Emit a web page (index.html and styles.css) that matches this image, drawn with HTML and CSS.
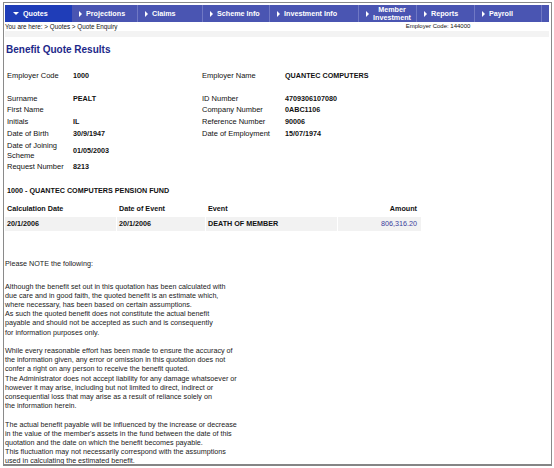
FILE: index.html
```html
<!DOCTYPE html>
<html>
<head>
<meta charset="utf-8">
<title>Benefit Quote Results</title>
<link rel="stylesheet" href="styles.css">
</head>
<body>
<div class="frame">
  <nav class="nav">
    <a class="tab tab-sel w-quotes"><span class="arr-down"></span>Quotes</a>
    <a class="tab w-proj"><span class="arr"></span>Projections</a>
    <a class="tab w-claims"><span class="arr"></span>Claims</a>
    <a class="tab w-scheme"><span class="arr"></span>Scheme Info</a>
    <a class="tab w-invest"><span class="arr"></span>Investment Info</a>
    <a class="tab w-member"><span class="arr"></span><span class="two">Member<br>Investment</span></a>
    <a class="tab w-reports"><span class="arr"></span>Reports</a>
    <a class="tab w-payroll"><span class="arr"></span>Payroll</a>
    <span class="tab-fill"></span>
  </nav>
  <div class="crumbs">
    <span class="crumb-path">You are here: &gt; Quotes &gt; Quote Enquiry</span>
    <span class="crumb-emp">Employer Code: 144000</span>
  </div>
  <div class="band"></div>

  <h1 class="title">Benefit Quote Results</h1>

  <div class="details">
    <div class="lbl">Employer Code</div><div class="val">1000</div><div class="lbl">Employer Name</div><div class="val">QUANTEC COMPUTERS</div>
    <div class="spacer"></div>
    <div class="lbl">Surname</div><div class="val">PEALT</div><div class="lbl">ID Number</div><div class="val">4709306107080</div>
    <div class="lbl">First Name</div><div class="val"></div><div class="lbl">Company Number</div><div class="val">0ABC1106</div>
    <div class="lbl">Initials</div><div class="val">IL</div><div class="lbl">Reference Number</div><div class="val">90006</div>
    <div class="lbl">Date of Birth</div><div class="val">30/9/1947</div><div class="lbl">Date of Employment</div><div class="val">15/07/1974</div>
    <div class="lbl">Date of Joining Scheme</div><div class="val">01/05/2003</div><div class="lbl"></div><div class="val"></div>
    <div class="lbl">Request Number</div><div class="val">8213</div><div class="lbl"></div><div class="val"></div>
  </div>

  <h2 class="fund">1000 - QUANTEC COMPUTERS PENSION FUND</h2>

  <table class="calc">
    <thead>
      <tr>
        <th class="c1">Calculation Date</th>
        <th class="c2">Date of Event</th>
        <th class="c3">Event</th>
        <th class="c4">Amount</th>
      </tr>
    </thead>
    <tbody>
      <tr>
        <td class="c1">20/1/2006</td>
        <td class="c2">20/1/2006</td>
        <td class="c3">DEATH OF MEMBER</td>
        <td class="c4 amount">806,316.20</td>
      </tr>
    </tbody>
  </table>

  <div class="notes">
    <p class="lead">Please NOTE the following:</p>
    <p>Although the benefit set out in this quotation has been calculated with<br>due care and in good faith, the quoted benefit is an estimate which,<br>where necessary, has been based on certain assumptions.<br>As such the quoted benefit does not constitute the actual benefit<br>payable and should not be accepted as such and is consequently<br>for information purposes only.</p>
    <p>While every reasonable effort has been made to ensure the accuracy of<br>the information given, any error or omission in this quotation does not<br>confer a right on any person to receive the benefit quoted.<br>The Administrator does not accept liability for any damage whatsoever or<br>however it may arise, including but not limited to direct, indirect or<br>consequential loss that may arise as a result of reliance solely on<br>the information herein.</p>
    <p>The actual benefit payable will be influenced by the increase or decrease<br>in the value of the member's assets in the fund between the date of this<br>quotation and the date on which the benefit becomes payable.<br>This fluctuation may not necessarily correspond with the assumptions<br>used in calculating the estimated benefit.</p>
  </div>
</div>
</body>
</html>
```
FILE: styles.css
```css
html, body {
  margin: 0;
  padding: 0;
  background: #ffffff;
}
body {
  font-family: "Liberation Sans", Arial, sans-serif;
  color: #111111;
}
.frame {
  box-sizing: border-box;
  margin: 2px 2px 0 3px;
  width: 549px;
  height: 464px;
  border: 1px solid #8a8a8a;
  border-bottom: 2px solid #858585;
  overflow: hidden;
  background: #ffffff;
}

/* navigation */
.nav {
  display: flex;
  height: 17px;
  margin: 2px 2px 0 1px;
  background: #4a55b2;
}
.tab {
  box-sizing: border-box;
  display: flex;
  align-items: center;
  height: 17px;
  padding-left: 7px;
  border-right: 1px solid #7078c4;
  color: #ffffff;
  font-weight: bold;
  font-size: 7.2px;
  white-space: nowrap;
  text-decoration: none;
}
.tab-sel {
  background: #1f3db8;
  padding-left: 8px;
  border-right-color: #1f3db8;
}
.w-quotes { width: 67px; }
.w-proj { width: 66px; }
.w-claims { width: 65px; }
.w-scheme { width: 67px; }
.w-invest { width: 89px; }
.w-member { width: 58px; }
.w-reports { width: 58px; }
.w-payroll { width: 67px; }
.tab-fill { flex: 1; }
.arr {
  width: 0;
  height: 0;
  border-left: 3px solid #ffffff;
  border-top: 3px solid transparent;
  border-bottom: 3px solid transparent;
  margin-right: 4px;
  flex: none;
}
.arr-down {
  width: 0;
  height: 0;
  border-top: 3px solid #ffffff;
  border-left: 3px solid transparent;
  border-right: 3px solid transparent;
  margin-right: 4px;
  flex: none;
}
.two {
  display: block;
  text-align: center;
  line-height: 8px;
}

/* breadcrumb */
.crumbs {
  display: flex;
  height: 9px;
  line-height: 9px;
  font-size: 6.3px;
  margin-left: 1px;
}
.crumb-path { width: 383px; }
.crumb-emp { width: 100px; text-align: center; font-size: 6px; }
.band {
  height: 6px;
  background: #f3f3f3;
  margin: 0 2px 0 1px;
}

.title {
  margin: 7px 0 0 2px;
  font-size: 10px;
  line-height: 12px;
  color: #1d2889;
  font-weight: bold;
}

/* details */
.details {
  display: grid;
  grid-template-columns: 66px 129px 83px 1fr;
  margin: 14px 0 0 3px;
  font-size: 7.5px;
  line-height: 9.8px;
  align-items: center;
}
.details > div { padding: 1px 0; }
.details .val {
  font-weight: bold;
  font-size: 7.2px;
}
.details .spacer {
  grid-column: 1 / -1;
  height: 10.9px;
  padding: 0;
}

.fund {
  margin: 12.6px 0 0 3px;
  font-size: 7.2px;
  line-height: 10px;
  font-weight: bold;
}

/* calc table */
.calc {
  margin: 4px 0 0 0;
  border-collapse: separate;
  border-spacing: 1px 2px;
  font-size: 7.2px;
}
.calc th, .calc td {
  padding: 0 0 0 2px;
  height: 13px;
  line-height: 9px;
  text-align: left;
  font-weight: bold;
}
.calc td { background: #f2f2f2; height: 14px; }
.calc .c1 { width: 109px; }
.calc .c2 { width: 86px; }
.calc .c3 { width: 129px; }
.calc .c4 { width: 77px; text-align: right; padding-right: 4px; }
.calc .amount { font-weight: normal; color: #3a3c9c; }

/* notes */
.notes {
  margin: 26px 0 0 1px;
  font-size: 7.2px;
  line-height: 9.2px;
  color: #1a1a1a;
}
.notes p { margin: 0 0 9.2px 0; }
.notes p.lead { margin-bottom: 13.5px; }
```
